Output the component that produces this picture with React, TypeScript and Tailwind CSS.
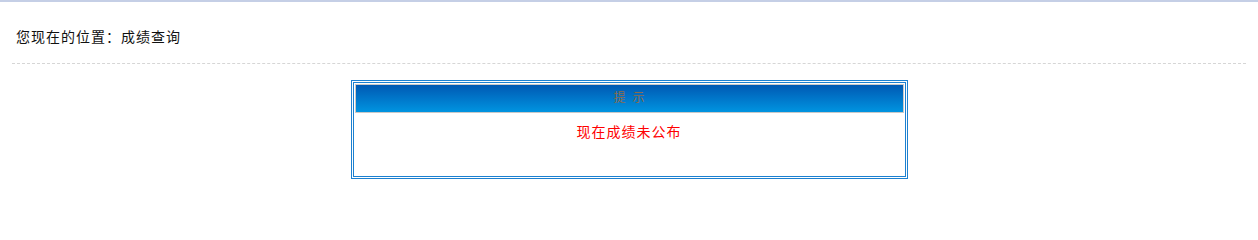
import React from "react";

export default function App() {
  return (
    <div
      className="w-[1258px] h-[231px] bg-white text-black"
      style={{ fontFamily: '"Noto Sans CJK SC", "Noto Sans", sans-serif' }}
    >
      <div className="h-[2px] bg-[#c5cfe6]" />
      <div className="mx-[12px] pt-[24px] pb-[17px] border-b border-dashed border-[#d6d6d6]">
        <div className="pl-[4px] text-[14px] leading-[20px] tracking-[1px] text-[#111]">
          您现在的位置：成绩查询
        </div>
      </div>
      <div className="flex justify-center mt-[16px]">
        <div className="w-[557px] border border-[#1c80d0] p-[1px]">
          <div className="border border-[#1c80d0] pt-[1px] px-[1px]">
            <div className="h-[29px] pb-[3px] border border-[#c8c8c8] bg-gradient-to-b from-[#0059b3] to-[#0094e0] flex items-center justify-center gap-[7px] text-[12px] leading-[14px] text-[#8c6c4c]">
              <span>提</span>
              <span>示</span>
            </div>
            <div className="h-[63px] pt-[8px] text-center text-[14px] leading-[20px] tracking-[1px] text-[#ff0000]">
              现在成绩未公布
            </div>
          </div>
        </div>
      </div>
    </div>
  );
}
